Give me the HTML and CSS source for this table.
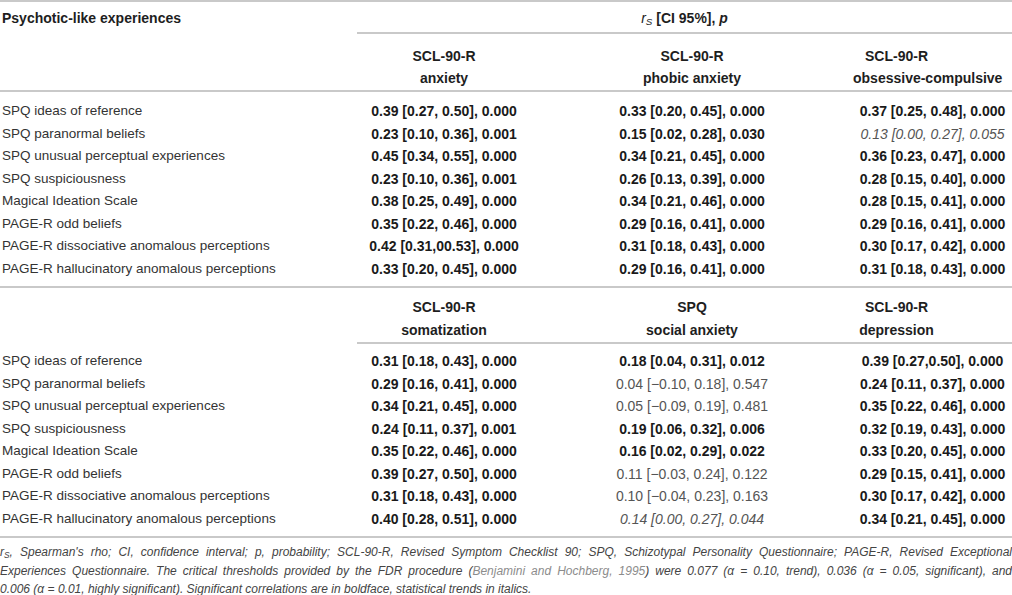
FILE: index.html
```html
<!DOCTYPE html>
<html lang="en">
<head>
<meta charset="utf-8">
<title>Psychotic-like experiences – correlations</title>
<link rel="stylesheet" href="styles.css">
</head>
<body>
<div class="page">
<table class="results">
  <colgroup>
    <col class="c-label">
    <col class="c-a">
    <col class="c-b">
    <col class="c-c">
  </colgroup>
  <thead>
    <tr class="h-top">
      <th class="lbl-head" rowspan="2">Psychotic-like experiences</th>
      <th class="stat" colspan="3"><i class="rs">r<sub>S</sub></i> [CI 95%], <i>p</i></th>
    </tr>
    <tr class="h-scales">
      <th class="sc">SCL-90-R<br>anxiety</th>
      <th class="sc">SCL-90-R<br>phobic anxiety</th>
      <th class="sc sc-last">SCL-90-R<br>obsessive-compulsive</th>
    </tr>
  </thead>
  <tbody class="block">
    <tr class="first"><td class="lbl">SPQ ideas of reference</td><td class="v b">0.39 [0.27, 0.50], 0.000</td><td class="v b">0.33 [0.20, 0.45], 0.000</td><td class="v b">0.37 [0.25, 0.48], 0.000</td></tr>
    <tr><td class="lbl">SPQ paranormal beliefs</td><td class="v b">0.23 [0.10, 0.36], 0.001</td><td class="v b">0.15 [0.02, 0.28], 0.030</td><td class="v t">0.13 [0.00, 0.27], 0.055</td></tr>
    <tr><td class="lbl">SPQ unusual perceptual experiences</td><td class="v b">0.45 [0.34, 0.55], 0.000</td><td class="v b">0.34 [0.21, 0.45], 0.000</td><td class="v b">0.36 [0.23, 0.47], 0.000</td></tr>
    <tr><td class="lbl">SPQ suspiciousness</td><td class="v b">0.23 [0.10, 0.36], 0.001</td><td class="v b">0.26 [0.13, 0.39], 0.000</td><td class="v b">0.28 [0.15, 0.40], 0.000</td></tr>
    <tr><td class="lbl">Magical Ideation Scale</td><td class="v b">0.38 [0.25, 0.49], 0.000</td><td class="v b">0.34 [0.21, 0.46], 0.000</td><td class="v b">0.28 [0.15, 0.41], 0.000</td></tr>
    <tr><td class="lbl">PAGE-R odd beliefs</td><td class="v b">0.35 [0.22, 0.46], 0.000</td><td class="v b">0.29 [0.16, 0.41], 0.000</td><td class="v b">0.29 [0.16, 0.41], 0.000</td></tr>
    <tr><td class="lbl">PAGE-R dissociative anomalous perceptions</td><td class="v b">0.42 [0.31,00.53], 0.000</td><td class="v b">0.31 [0.18, 0.43], 0.000</td><td class="v b">0.30 [0.17, 0.42], 0.000</td></tr>
    <tr class="last"><td class="lbl">PAGE-R hallucinatory anomalous perceptions</td><td class="v b">0.33 [0.20, 0.45], 0.000</td><td class="v b">0.29 [0.16, 0.41], 0.000</td><td class="v b">0.31 [0.18, 0.43], 0.000</td></tr>
  </tbody>
  <tbody class="block block-2">
    <tr class="h-scales2">
      <th class="lbl-empty"></th>
      <th class="sc">SCL-90-R<br>somatization</th>
      <th class="sc">SPQ<br>social anxiety</th>
      <th class="sc sc-last">SCL-90-R<br>depression</th>
    </tr>
    <tr class="first"><td class="lbl">SPQ ideas of reference</td><td class="v b">0.31 [0.18, 0.43], 0.000</td><td class="v b">0.18 [0.04, 0.31], 0.012</td><td class="v b">0.39 [0.27,0.50], 0.000</td></tr>
    <tr><td class="lbl">SPQ paranormal beliefs</td><td class="v b">0.29 [0.16, 0.41], 0.000</td><td class="v n">0.04 [&minus;0.10, 0.18], 0.547</td><td class="v b">0.24 [0.11, 0.37], 0.000</td></tr>
    <tr><td class="lbl">SPQ unusual perceptual experiences</td><td class="v b">0.34 [0.21, 0.45], 0.000</td><td class="v n">0.05 [&minus;0.09, 0.19], 0.481</td><td class="v b">0.35 [0.22, 0.46], 0.000</td></tr>
    <tr><td class="lbl">SPQ suspiciousness</td><td class="v b">0.24 [0.11, 0.37], 0.001</td><td class="v b">0.19 [0.06, 0.32], 0.006</td><td class="v b">0.32 [0.19, 0.43], 0.000</td></tr>
    <tr><td class="lbl">Magical Ideation Scale</td><td class="v b">0.35 [0.22, 0.46], 0.000</td><td class="v b">0.16 [0.02, 0.29], 0.022</td><td class="v b">0.33 [0.20, 0.45], 0.000</td></tr>
    <tr><td class="lbl">PAGE-R odd beliefs</td><td class="v b">0.39 [0.27, 0.50], 0.000</td><td class="v n">0.11 [&minus;0.03, 0.24], 0.122</td><td class="v b">0.29 [0.15, 0.41], 0.000</td></tr>
    <tr><td class="lbl">PAGE-R dissociative anomalous perceptions</td><td class="v b">0.31 [0.18, 0.43], 0.000</td><td class="v n">0.10 [&minus;0.04, 0.23], 0.163</td><td class="v b">0.30 [0.17, 0.42], 0.000</td></tr>
    <tr class="last"><td class="lbl">PAGE-R hallucinatory anomalous perceptions</td><td class="v b">0.40 [0.28, 0.51], 0.000</td><td class="v t">0.14 [0.00, 0.27], 0.044</td><td class="v b">0.34 [0.21, 0.45], 0.000</td></tr>
  </tbody>
</table>
<div class="footnote">
  <span class="fl"><i>r<sub>S</sub></i>, Spearman's rho; CI, confidence interval; p, probability; SCL-90-R, Revised Symptom Checklist 90; SPQ, Schizotypal Personality Questionnaire; PAGE-R, Revised Exceptional</span>
  <span class="fl">Experiences Questionnaire. The critical thresholds provided by the FDR procedure (<span class="ref">Benjamini and Hochberg, 1995</span>) were 0.077 (α = 0.10, trend), 0.036 (α = 0.05, significant), and</span>
  <span class="fl fl-last">0.006 (α = 0.01, highly significant). Significant correlations are in boldface, statistical trends in italics.</span>
</div>
</div>
</body>
</html>
```

FILE: styles.css
```css
html, body {
  margin: 0;
  padding: 0;
  background: #ffffff;
}

.page {
  width: 1012px;
  font-family: "Liberation Sans", Arial, Helvetica, sans-serif;
  color: #222;
}

.results {
  width: 1012px;
  table-layout: fixed;
  border-collapse: separate;
  border-spacing: 0;
  border-top: 2px solid #c9c9c9;
}

.c-label { width: 357px; }
.c-a { width: 174px; }
.c-b { width: 322px; }
.c-c { width: 159px; }

.results th,
.results td {
  padding: 0;
  white-space: nowrap;
}

.results th {
  font-weight: bold;
  font-size: 14px;
  color: #1e1e1e;
  text-align: center;
}

/* header row 1 */
.h-top th {
  padding-top: 5px;
  padding-bottom: 3px;
  line-height: 22px;
  vertical-align: top;
}

.lbl-head {
  text-align: left !important;
  padding-left: 2px !important;
  border-bottom: 2px solid #c9c9c9;
}

.stat {
  border-bottom: 2px solid #c9c9c9;
  font-weight: bold;
}

.stat i {
  font-style: italic;
}

.rs {
  font-weight: normal;
}

.rs sub,
.footnote sub {
  font-size: 0.7em;
  vertical-align: -0.25em;
  line-height: 0;
}

/* header row 2 */
.h-scales th {
  line-height: 22px;
  padding-top: 11px;
  padding-bottom: 1px;
  border-bottom: 2px solid #c9c9c9;
}

.sc-last {
  padding-right: 72px !important;
}

/* block 2 header */
.h-scales2 th {
  line-height: 22.5px;
  padding-top: 8px;
  padding-bottom: 1px;
}

.h-scales2 th.sc {
  border-bottom: 2px solid #c9c9c9;
}

/* data rows */
.results td {
  line-height: 22.5px;
  height: 22.5px;
}

.lbl {
  font-size: 13.5px;
  color: #333;
  padding-left: 2px !important;
  text-align: left;
}

.v {
  text-align: center;
  font-size: 14px;
}

.v.b {
  font-weight: bold;
  color: #1a1a1a;
}

.v.n {
  font-weight: normal;
  color: #555;
}

.v.t {
  font-weight: normal;
  font-style: italic;
  color: #555;
}

.block .first td { padding-top: 8px; }
.block .last td {
  padding-bottom: 6px;
  border-bottom: 2px solid #c9c9c9;
}

.block-2 .first td { padding-top: 6px; }

/* footnote */
.footnote {
  margin-top: 5px;
  font-size: 12px;
  line-height: 18.5px;
  font-style: italic;
  color: #444;
}

.fl {
  display: block;
  white-space: nowrap;
  text-align: justify;
  text-align-last: justify;
}

.fl-last {
  text-align-last: left;
}

.ref {
  color: #8c8c8c;
}
```
